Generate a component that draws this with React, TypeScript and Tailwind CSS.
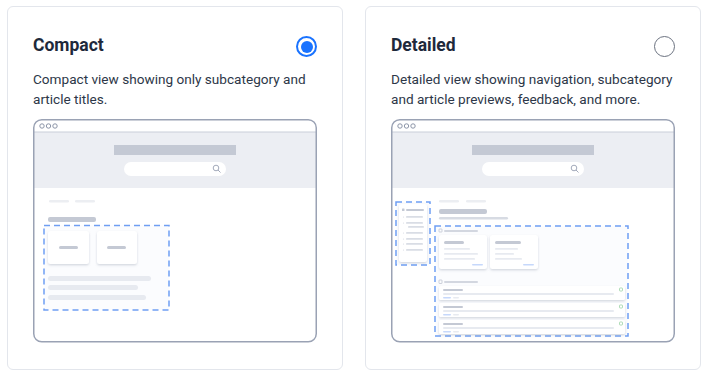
import type { ReactNode } from 'react'

const DARK = '#c4c9d4'
const LIGHT = '#e7eaf0'
const DASH = '#6f9ef3'

// browser window outline shared by both previews
function Frame({ id, children }: { id: string; children: ReactNode }) {
  return (
    <svg width="284" height="224" viewBox="0 0 284 224" className="block">
      <defs>
        <filter id={id} x="-30%" y="-30%" width="160%" height="170%">
          <feDropShadow dx="0" dy="1.2" stdDeviation="1.3" floodColor="#8a94a8" floodOpacity="0.38" />
        </filter>
      </defs>
      <rect x="0.75" y="0.75" width="282.5" height="222" rx="8" fill="#ffffff" />
      <rect x="1" y="13" width="282" height="56" fill="#eceef3" />
      <line x1="1" y1="13" x2="283" y2="13" stroke="#c9ced9" strokeWidth="1" />
      <circle cx="9" cy="7" r="2.2" fill="none" stroke="#8c95a8" strokeWidth="1" />
      <circle cx="15.5" cy="7" r="2.2" fill="none" stroke="#8c95a8" strokeWidth="1" />
      <circle cx="22" cy="7" r="2.2" fill="none" stroke="#8c95a8" strokeWidth="1" />
      <rect x="81" y="26" width="122" height="10" fill={DARK} />
      <rect x="91" y="43" width="102" height="14" rx="7" fill="#ffffff" />
      <circle cx="183" cy="49" r="2.8" fill="none" stroke="#a3aabb" strokeWidth="1" />
      <line x1="185" y1="51" x2="187.5" y2="53.5" stroke="#a3aabb" strokeWidth="1" />
      {children}
      <rect x="0.75" y="0.75" width="282.5" height="222" rx="8" fill="none" stroke="#9aa2b4" strokeWidth="1.5" />
    </svg>
  )
}

function CompactMock() {
  return (
    <Frame id="shc">
      <rect x="16" y="81" width="20" height="2.5" rx="1.2" fill="#eceef2" />
      <rect x="42" y="81" width="20" height="2.5" rx="1.2" fill="#eceef2" />
      <rect x="15" y="98" width="48" height="5" rx="2" fill={DARK} />
      <rect x="11" y="106.5" width="125" height="84.5" fill="#fbfcfe" stroke={DASH} strokeWidth="1.5" strokeDasharray="6 4" />
      <rect x="15" y="112" width="41" height="33" rx="2.5" fill="#ffffff" filter="url(#shc)" />
      <rect x="64" y="112" width="40" height="33" rx="2.5" fill="#ffffff" filter="url(#shc)" />
      <rect x="26" y="127" width="19" height="3" rx="1.5" fill={DARK} />
      <rect x="74" y="127" width="19" height="3" rx="1.5" fill={DARK} />
      <rect x="15" y="157" width="103" height="5" rx="2.5" fill={LIGHT} />
      <rect x="15" y="166" width="90" height="5" rx="2.5" fill={LIGHT} />
      <rect x="15" y="176" width="98" height="5" rx="2.5" fill={LIGHT} />
    </Frame>
  )
}

function Row({ y }: { y: number }) {
  return (
    <g>
      <rect x="48" y={y} width="186" height="14" rx="1.5" fill="#ffffff" filter="url(#shd)" />
      <rect x="52" y={y + 3} width="20" height="2" rx="1" fill={DARK} />
      <rect x="52" y={y + 7} width="171" height="2" rx="1" fill={LIGHT} />
      <rect x="52" y={y + 11} width="8" height="1.6" rx="0.8" fill="#c6d8fb" />
      <rect x="62" y={y + 11} width="6" height="1.6" rx="0.8" fill={LIGHT} />
      <rect x="228.5" y={y + 2} width="3" height="3" rx="0.6" fill="none" stroke="#9bd3a4" strokeWidth="0.8" />
    </g>
  )
}

function DetailedMock() {
  const navY = [97, 103, 113, 119, 124, 130]
  return (
    <Frame id="shd">
      <rect x="48" y="81" width="20" height="2.5" rx="1.2" fill="#eceef2" />
      <rect x="75" y="81" width="20" height="2.5" rx="1.2" fill="#eceef2" />
      <rect x="48" y="90" width="48" height="5" rx="2" fill={DARK} />
      <rect x="48" y="98" width="69" height="2.5" rx="1.2" fill="#d7dbe3" />

      {/* sidebar nav */}
      <rect x="5" y="83" width="34" height="63" fill="#fbfcfe" stroke={DASH} strokeWidth="1.5" strokeDasharray="6 4" />
      <rect x="8" y="85" width="28" height="58" rx="2.5" fill="#ffffff" filter="url(#shd)" />
      <rect x="11" y="89.5" width="2.5" height="2.5" rx="0.5" fill={DARK} />
      <rect x="15" y="90" width="18" height="2" rx="1" fill={DARK} />
      {navY.map((y) => (
        <g key={y}>
          <circle cx="12.5" cy={y + 1} r="0.6" fill="#d7dbe3" />
          <rect x="15" y={y} width="17" height="1.8" rx="0.9" fill="#d9dde5" />
        </g>
      ))}
      <rect x="17" y="107" width="16" height="1.8" rx="0.9" fill="#d9dde5" />

      {/* subcategories + articles */}
      <rect x="44" y="107" width="193" height="110" fill="#fbfcfe" stroke={DASH} strokeWidth="1.5" strokeDasharray="6 4" />
      <rect x="48" y="110" width="3" height="3" rx="0.5" fill="none" stroke="#b9bfcc" strokeWidth="0.7" />
      <rect x="53" y="111" width="34" height="2" rx="1" fill="#d3d7e0" />

      <rect x="48" y="116" width="48" height="34" rx="2.5" fill="#ffffff" filter="url(#shd)" />
      <rect x="53" y="122" width="20" height="3" rx="1.5" fill={DARK} />
      <rect x="53" y="129" width="26" height="1.8" rx="0.9" fill={LIGHT} />
      <rect x="53" y="134" width="34" height="1.8" rx="0.9" fill={LIGHT} />
      <rect x="53" y="139" width="31" height="1.8" rx="0.9" fill={LIGHT} />
      <rect x="81" y="145" width="11" height="1.6" rx="0.8" fill="#c6d8fb" />

      <rect x="99" y="116" width="48" height="34" rx="2.5" fill="#ffffff" filter="url(#shd)" />
      <rect x="104" y="122" width="26" height="3" rx="1.5" fill={DARK} />
      <rect x="104" y="129" width="23" height="1.8" rx="0.9" fill={LIGHT} />
      <rect x="104" y="134" width="19" height="1.8" rx="0.9" fill={LIGHT} />
      <rect x="104" y="139" width="27" height="1.8" rx="0.9" fill={LIGHT} />
      <rect x="132" y="145" width="11" height="1.6" rx="0.8" fill="#c6d8fb" />

      <rect x="48" y="161" width="3" height="3.5" rx="0.5" fill="none" stroke="#b9bfcc" strokeWidth="0.7" />
      <rect x="53" y="162" width="34" height="2" rx="1" fill="#d3d7e0" />
      <Row y={167} />
      <Row y={184} />
      <Row y={201} />
    </Frame>
  )
}

function Radio({ checked }: { checked: boolean }) {
  return checked ? (
    <span className="flex h-[21px] w-[21px] items-center justify-center rounded-full border-2 border-[#1a73ff] bg-white">
      <span className="h-[12px] w-[12px] rounded-full bg-[#1a73ff]" />
    </span>
  ) : (
    <span className="block h-[21px] w-[21px] rounded-full border-[1.5px] border-[#6b7280] bg-white" />
  )
}

function OptionCard({
  title,
  text,
  checked,
  children,
}: {
  title: string
  text: string
  checked: boolean
  children: ReactNode
}) {
  return (
    <div className="flex h-[364px] w-[336px] flex-col rounded-md border border-[#e3e6ec] bg-white px-[25px] pt-[25px]">
      <div className="flex items-center justify-between">
        <h3 className="text-[17.5px] font-bold leading-[22px] text-[#1e293b]">{title}</h3>
        <div className="mt-[4px]">
          <Radio checked={checked} />
        </div>
      </div>
      <p className="mt-[12px] text-[13.6px] leading-[20px] text-[#2d3748]">{text}</p>
      <div className="mt-[10px]">{children}</div>
    </div>
  )
}

export default function App() {
  return (
    <div className="flex h-[382px] w-[708px] gap-[22px] bg-white pl-[7px] pt-[6px] font-[Roboto,'Liberation_Sans',sans-serif]">
      <OptionCard
        title="Compact"
        text="Compact view showing only subcategory and article titles."
        checked
      >
        <CompactMock />
      </OptionCard>
      <OptionCard
        title="Detailed"
        text="Detailed view showing navigation, subcategory and article previews, feedback, and more."
        checked={false}
      >
        <DetailedMock />
      </OptionCard>
    </div>
  )
}
